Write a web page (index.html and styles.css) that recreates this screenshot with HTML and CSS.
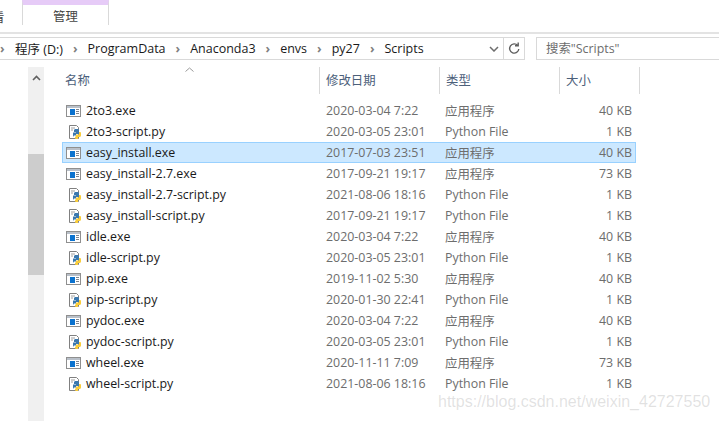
FILE: index.html
```html
<!DOCTYPE html>
<html lang="zh-CN">
<head>
  <meta charset="UTF-8" />
  <title>Scripts</title>
  <link rel="stylesheet" href="styles.css">
</head>
<body>
  <svg class="sprites" width="0" height="0">
    <symbol id="exe" viewBox="0 0 16 16">
      <rect x="0.5" y="2.500" width="14" height="11" fill="#fff" stroke="#8f8f8f"/>
      <rect x="1" y="3" width="13" height="2" fill="#b9c0c9"/>
      <rect x="4" y="6" width="5" height="6" fill="#0a72cf"/>
      <path d="M10 6.500h3M10 8.500h3M10 10.500h3" stroke="#7d8590"/>
    </symbol>
    <symbol id="py" viewBox="0 0 16 16">
      <path d="M3.500 1.500h7l2 2v11h-9z" fill="#fff" stroke="#808080"/>
      <path d="M5 4h4M5 6h2" stroke="#a0a0a0"/>
      <path d="M9 5h3l1 1v4h-3v1.500H8L7 13V8.500h3V8H8V6z" fill="#3a78ae"/>
      <path d="M13 8h1.500l.5 1v3l-1 1h-2v2H9.500L9 14v-1l1-1v-1.500h3z" fill="#f9cd3c"/>
    </symbol>
  </svg>

  <!-- ribbon -->
  <div class="ribbon">
    <span class="ribbon-cut">看</span>
    <div class="tab-manage">管理</div>
  </div>

  <!-- address + search -->
  <div class="nav-row">
    <div class="address">
      <span class="sep first">›</span>
      <span class="crumb">程序 (D:)</span><span class="sep">›</span>
      <span class="crumb">ProgramData</span><span class="sep">›</span>
      <span class="crumb">Anaconda3</span><span class="sep">›</span>
      <span class="crumb">envs</span><span class="sep">›</span>
      <span class="crumb">py27</span><span class="sep">›</span>
      <span class="crumb">Scripts</span>
      <svg class="chevron" width="10" height="6" viewBox="0 0 10 6"><path d="M1 1l4 4 4-4" fill="none" stroke="#6d6d6d" stroke-width="1.500"/></svg>
      <div class="refresh">
        <svg width="12" height="13" viewBox="0 0 12 13"><path d="M9.700 3.500A4.600 4.600 0 1 0 10.800 7M7 3.700h3.200V0.500" fill="none" stroke="#5f5f5f" stroke-width="1.400"/></svg>
      </div>
    </div>
    <div class="search">搜索"Scripts"</div>
  </div>

  <div class="main">
    <div class="scrollbar">
      <svg class="scroll-up" width="9" height="6" viewBox="0 0 9 6"><path d="M1 5l3.500-3.500L8 5" fill="none" stroke="#606060" stroke-width="1.600"/></svg>
      <div class="thumb"></div>
    </div>

    <div class="files">
      <div class="file-head">
        <div class="col col-name">
          名称
          <svg class="sort" width="9" height="5" viewBox="0 0 9 5"><path d="M0.500 4.500l4-3.500 4 3.500" fill="none" stroke="#9a9a9a"/></svg>
        </div>
        <div class="col col-date">修改日期</div>
        <div class="col col-type">类型</div>
        <div class="col col-size">大小</div>
      </div>

      <div class="rows">
        <div class="row"><svg class="ico"><use href="#exe"/></svg><span class="name">2to3.exe</span><span class="date">2020-03-04 7:22</span><span class="type">应用程序</span><span class="size">40 KB</span></div>
        <div class="row"><svg class="ico"><use href="#py"/></svg><span class="name">2to3-script.py</span><span class="date">2020-03-05 23:01</span><span class="type">Python File</span><span class="size">1 KB</span></div>
        <div class="row selected"><svg class="ico"><use href="#exe"/></svg><span class="name">easy_install.exe</span><span class="date">2017-07-03 23:51</span><span class="type">应用程序</span><span class="size">40 KB</span></div>
        <div class="row"><svg class="ico"><use href="#exe"/></svg><span class="name">easy_install-2.7.exe</span><span class="date">2017-09-21 19:17</span><span class="type">应用程序</span><span class="size">73 KB</span></div>
        <div class="row"><svg class="ico"><use href="#py"/></svg><span class="name">easy_install-2.7-script.py</span><span class="date">2021-08-06 18:16</span><span class="type">Python File</span><span class="size">1 KB</span></div>
        <div class="row"><svg class="ico"><use href="#py"/></svg><span class="name">easy_install-script.py</span><span class="date">2017-09-21 19:17</span><span class="type">Python File</span><span class="size">1 KB</span></div>
        <div class="row"><svg class="ico"><use href="#exe"/></svg><span class="name">idle.exe</span><span class="date">2020-03-04 7:22</span><span class="type">应用程序</span><span class="size">40 KB</span></div>
        <div class="row"><svg class="ico"><use href="#py"/></svg><span class="name">idle-script.py</span><span class="date">2020-03-05 23:01</span><span class="type">Python File</span><span class="size">1 KB</span></div>
        <div class="row"><svg class="ico"><use href="#exe"/></svg><span class="name">pip.exe</span><span class="date">2019-11-02 5:30</span><span class="type">应用程序</span><span class="size">40 KB</span></div>
        <div class="row"><svg class="ico"><use href="#py"/></svg><span class="name">pip-script.py</span><span class="date">2020-01-30 22:41</span><span class="type">Python File</span><span class="size">1 KB</span></div>
        <div class="row"><svg class="ico"><use href="#exe"/></svg><span class="name">pydoc.exe</span><span class="date">2020-03-04 7:22</span><span class="type">应用程序</span><span class="size">40 KB</span></div>
        <div class="row"><svg class="ico"><use href="#py"/></svg><span class="name">pydoc-script.py</span><span class="date">2020-03-05 23:01</span><span class="type">Python File</span><span class="size">1 KB</span></div>
        <div class="row"><svg class="ico"><use href="#exe"/></svg><span class="name">wheel.exe</span><span class="date">2020-11-11 7:09</span><span class="type">应用程序</span><span class="size">73 KB</span></div>
        <div class="row"><svg class="ico"><use href="#py"/></svg><span class="name">wheel-script.py</span><span class="date">2021-08-06 18:16</span><span class="type">Python File</span><span class="size">1 KB</span></div>
      </div>
    </div>
  </div>

  <div class="watermark">https://blog.csdn.net/weixin_42727550</div>
</body>
</html>
```

FILE: styles.css
```css
:root {
  --line: #d9d9d9;
  --muted: #6d6d6d;
  --head: #4c607a;
  --text: #1a1a1a;
}

html, body {
  height: 100%;
}

body {
  margin: 0;
  overflow: hidden;
  position: relative;
  background: #fff;
  color: var(--text);
  font-family: "Open Sans", "Noto Sans CJK SC", sans-serif;
  font-size: 12.4px;
}

.sprites {
  display: block;
  height: 0;
}

/* ribbon */
.ribbon {
  height: 32px;
  display: flex;
  border-bottom: 2px solid #e3e3e3;
}

.ribbon-cut {
  width: 30px;
  flex: none;
  margin-left: -8px;
  padding-top: 8px;
  color: #444;
}

.tab-manage {
  width: 85px;
  height: 20px;
  flex: none;
  border-top: 5px solid #e6cbf7;
  border-left: 1px solid var(--line);
  border-right: 1px solid var(--line);
  text-align: center;
  line-height: 24px;
  color: #444;
}

/* address bar */
.nav-row {
  display: flex;
  margin-top: 3px;
  height: 23px;
}

.address {
  width: 524px;
  height: 21px;
  flex: none;
  margin-left: -1px;
  border: 1px solid var(--line);
  display: flex;
  align-items: center;
  font-size: 12.5px;
}

.crumb {
  white-space: nowrap;
}

.sep {
  width: 24.6px;
  text-align: center;
  color: #808080;
  font-weight: bold;
}

.sep.first {
  width: 15px;
  text-align: left;
}

.chevron {
  margin-left: auto;
  margin-right: 4px;
}

.refresh {
  width: 20px;
  height: 21px;
  border-left: 1px solid var(--line);
  display: flex;
  align-items: center;
  justify-content: center;
}

.search {
  width: 190px;
  height: 21px;
  flex: none;
  margin-left: 11px;
  border: 1px solid var(--line);
  padding-left: 9px;
  line-height: 21px;
  color: var(--muted);
}

/* scrollbar + list */
.main {
  display: flex;
  margin-top: 7px;
  height: 361px;
}

.scrollbar {
  width: 16px;
  flex: none;
  margin-left: 28px;
  background: #f0f0f0;
  padding-top: 6px;
  box-sizing: border-box;
}

.scroll-up {
  display: block;
  margin: 2px auto 0;
}

.thumb {
  height: 121px;
  margin-top: 73px;
  background: #cdcdcd;
}

.files {
  flex: 1;
  padding-left: 3px;
}

.file-head {
  display: flex;
  height: 27px;
  margin-left: 4px;
  color: var(--head);
}

.col {
  box-sizing: border-box;
  border-right: 1px solid var(--line);
  padding-left: 6px;
  line-height: 27px;
  position: relative;
  flex: none;
}

.col-name {
  width: 269px;
  padding-left: 14px;
}

.col-date {
  width: 120px;
}

.col-type {
  width: 120px;
}

.col-size {
  width: 80px;
}

.sort {
  position: absolute;
  left: 134px;
  top: 0;
}

.rows {
  margin-top: 6px;
}

.row {
  display: flex;
  align-items: center;
  height: 21px;
  margin-left: 15px;
  width: 574px;
  box-sizing: border-box;
  border: 1px solid transparent;
  color: var(--muted);
  white-space: nowrap;
}

.row.selected {
  background: #cce8ff;
  border-color: #99d1ff;
}

.ico {
  width: 16px;
  height: 16px;
  margin-left: 3px;
  flex: none;
}

.name {
  width: 240px;
  margin-left: 4px;
  color: var(--text);
}

.date {
  width: 119px;
}

.type {
  width: 88px;
  flex: none;
}

.size {
  width: 99px;
  text-align: right;
  flex: none;
}

.watermark {
  position: absolute;
  left: 438px;
  top: 393px;
  font-family: "Liberation Sans", sans-serif;
  font-size: 16px;
  color: rgba(150, 150, 150, 0.28);
  white-space: nowrap;
}
```
